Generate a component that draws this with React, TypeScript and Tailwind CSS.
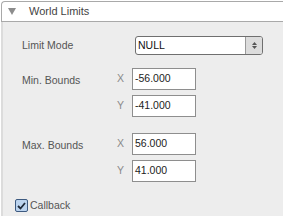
import React from 'react';

function NumField({ axis, value }: { axis: string; value: string }) {
  return (
    <div className="flex items-center">
      <span className="w-[13px] text-[#8a8a8a]">{axis}</span>
      <div className="ml-[2px] flex h-[22px] w-[64px] items-center border border-[#8e8e8e] bg-white pl-[2px] text-[#222]">
        {value}
      </div>
    </div>
  );
}

export default function App() {
  return (
    <div
      className="h-[216px] w-[283px] overflow-hidden bg-white text-[10.5px]"
      style={{ fontFamily: '"Liberation Sans", Arial, sans-serif' }}
    >
      {/* Header */}
      <div className="ml-[1px] mt-[1px] flex h-[21px] items-center rounded-tl-[4px] border-l border-t border-b border-[#a9a9a9] bg-white">
        <svg width="8" height="7" viewBox="0 0 8 7" className="ml-[6px]">
          <path d="M0 0 H8 L4 7 Z" fill="#8c8c8c" />
        </svg>
        <span className="ml-[13px] text-[11px] text-[#444]">World Limits</span>
      </div>

      {/* Body */}
      <div className="ml-[1px] flex h-[200px] flex-col border-l-2 border-[#dcdcdc] bg-[#ededed] pl-[19px] text-[#555]">
        <div className="mt-[14px] flex items-center">
          <span className="w-[113px]">Limit Mode</span>
          <div className="flex h-[19px] w-[128px] items-stretch overflow-hidden rounded-[3px] border border-[#6f6f6f] bg-white">
            <span className="flex flex-1 items-center pl-[2px] text-[#111]">NULL</span>
            <span className="flex w-[17px] flex-col items-center justify-center gap-[1px] border-l border-[#9a9a9a] bg-[#dcdcdc]">
              <svg width="5" height="3" viewBox="0 0 5 3">
                <path d="M0 3 L2.5 0 L5 3 Z" fill="#555" />
              </svg>
              <svg width="5" height="3" viewBox="0 0 5 3">
                <path d="M0 0 L2.5 3 L5 0 Z" fill="#555" />
              </svg>
            </span>
          </div>
        </div>

        <div className="mt-[13px] flex">
          <span className="mt-[5px] w-[95px]">Min. Bounds</span>
          <div className="flex flex-col gap-[5px]">
            <NumField axis="X" value="-56.000" />
            <NumField axis="Y" value="-41.000" />
          </div>
        </div>

        <div className="mt-[16px] flex">
          <span className="mt-[5px] w-[95px]">Max. Bounds</span>
          <div className="flex flex-col gap-[5px]">
            <NumField axis="X" value="56.000" />
            <NumField axis="Y" value="41.000" />
          </div>
        </div>

        <div className="-ml-[7px] mt-[16px] flex items-center">
          <span className="flex h-[13px] w-[13px] items-center justify-center rounded-[2px] border border-[#3d5a80] bg-[#bcd4ef]">
            <svg width="9" height="8" viewBox="0 0 9 8">
              <path d="M1 4 L3.5 6.5 L8 1" fill="none" stroke="#1e2a3a" strokeWidth="1.8" />
            </svg>
          </span>
          <span className="ml-[2px]">Callback</span>
        </div>
      </div>
    </div>
  );
}
